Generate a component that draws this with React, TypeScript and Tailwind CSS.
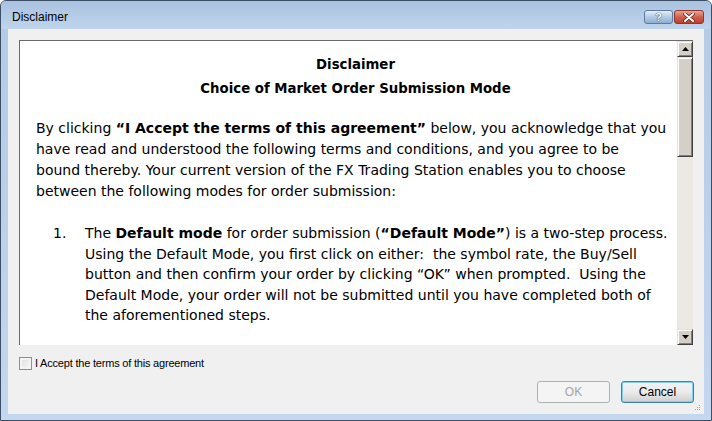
import React from 'react';

/**
 * Classic 3D scrollbar arrow button
 */
function ScrollButton({ dir }: { dir: 'up' | 'down' }) {
  return (
    <div className="h-[16px] w-[16px] shrink-0 bg-[#d4d0c8] border border-t-[#e4e2dc] border-l-[#e4e2dc] border-r-[#404040] border-b-[#404040] shadow-[inset_1px_1px_0_#ffffff,inset_-1px_-1px_0_#808080] flex items-center justify-center">
      <svg width="7" height="4" viewBox="0 0 7 4">
        {dir === 'up' ? <path d="M3.5 0 L7 4 L0 4 Z" fill="#000" /> : <path d="M0 0 L7 0 L3.5 4 Z" fill="#000" />}
      </svg>
    </div>
  );
}

export default function App() {
  return (
    <div className="w-[712px] h-[421px] flex flex-col bg-gradient-to-b from-[#b3cbe6] to-[#c3d7ee] border border-[#3d4f66] rounded-t-[6px] overflow-hidden font-['Liberation_Sans',Arial,sans-serif]">
      {/* 标题栏 */}
      <div className="h-[28px] shrink-0 flex items-center pt-[4px] pl-[11px] pr-[7px] bg-gradient-to-b from-[#a9c2df] to-[#c0d5ec]">
        <span className="text-[12px] text-black">Disclaimer</span>
        <div className="ml-auto flex gap-[1px]">
          <div className="w-[29px] h-[14px] rounded-[3px] border border-[#5f7a9c] bg-gradient-to-b from-[#e3eefa] via-[#b4cbe6] to-[#8eaed4] flex items-center justify-center">
            <span className="text-[11px] leading-none font-bold text-white [text-shadow:0_0_1px_#2a3d57,0_0_1px_#2a3d57]">?</span>
          </div>
          <div className="w-[30px] h-[14px] rounded-[3px] border border-[#8a3a2f] bg-gradient-to-b from-[#e7a597] via-[#d0604c] to-[#bd3f2b] flex items-center justify-center">
            <svg width="12" height="9" viewBox="0 0 12 9">
              <path d="M2 1 L10 8 M10 1 L2 8" stroke="#5a1f16" strokeWidth="3.4" strokeLinecap="round" />
              <path d="M2 1 L10 8 M10 1 L2 8" stroke="#ffffff" strokeWidth="2" strokeLinecap="round" />
            </svg>
          </div>
        </div>
      </div>

      {/* 客户区 */}
      <div className="relative flex-1 mx-[7px] mb-[6px] bg-[#f0f0f0] flex flex-col pt-[11px] pl-[11px]">
        {/* 文本框 */}
        <div className="h-[305px] mr-[11px] flex bg-white border-l border-t border-[#6b6b6b]">
          <div className="flex-1 overflow-hidden pl-[16px] pr-[2px] pt-[12px] text-[14px] text-black font-['DejaVu_Sans',Verdana,sans-serif]">
            <div className="text-center font-bold leading-[24px] text-[13.3px]">
              <div>Disclaimer</div>
              <div>Choice of Market Order Submission Mode</div>
            </div>
            <p className="mt-[17px] leading-[21px]">
              By clicking <b>“I Accept the terms of this agreement”</b> below, you acknowledge that you
              <br />
              have read and understood the following terms and conditions, and you agree to be
              <br />
              bound thereby. Your current version of the FX Trading Station enables you to choose
              <br />
              between the following modes for order submission:
            </p>
            <div className="mt-[21px] flex leading-[20.5px]">
              <span className="w-[49px] shrink-0 pl-[17px]">1.</span>
              <p>
                The <b>Default mode</b> for order submission (<b>“Default Mode”</b>) is a two-step process.
                <br />
                Using the Default Mode, you first click on either:&nbsp; the symbol rate, the Buy/Sell
                <br />
                button and then confirm your order by clicking “OK” when prompted.&nbsp; Using the
                <br />
                Default Mode, your order will not be submitted until you have completed both of
                <br />
                the aforementioned steps.
              </p>
            </div>
          </div>

          {/* 滚动条 */}
          <div className="w-[16px] shrink-0 flex flex-col bg-[#ebe9e4]">
            <ScrollButton dir="up" />
            <div className="h-[100px] shrink-0 bg-[#d4d0c8] border border-t-[#e4e2dc] border-l-[#e4e2dc] border-r-[#404040] border-b-[#404040] shadow-[inset_1px_1px_0_#ffffff,inset_-1px_-1px_0_#808080]" />
            <div className="flex-1" />
            <ScrollButton dir="down" />
          </div>
        </div>

        {/* 同意复选框 */}
        <label className="mt-[12px] flex items-center gap-[3px] h-[13px]">
          <span className="w-[13px] h-[13px] border border-[#8e8f8f] bg-gradient-to-br from-[#dcdcdc] to-[#fbfbfb] shadow-[inset_0_0_0_2px_#f4f4f4]" />
          <span className="text-[11px] tracking-[-0.2px] text-black">I Accept the terms of this agreement</span>
        </label>

        {/* 按钮 */}
        <div className="mt-[11px] flex justify-end gap-[11px] pr-[10px]">
          <button className="w-[73px] h-[22px] rounded-[3px] border border-[#adb2b5] bg-[#f4f4f4] text-[12px] text-[#a3a3a3]">
            OK
          </button>
          <button className="w-[73px] h-[22px] rounded-[3px] border border-[#3c7fb1] bg-gradient-to-b from-[#f2f2f2] via-[#ebebeb] to-[#cfcfcf] shadow-[inset_0_0_0_1px_#7fd0f2] text-[12px] text-black">
            Cancel
          </button>
        </div>

        {/* 尺寸调整手柄 */}
        <div className="absolute right-[3px] bottom-[3px] w-[7px] h-[7px]">
          <svg width="7" height="7" viewBox="0 0 7 7">
            <rect x="5" y="1" width="1" height="1" fill="#a0a0a0" />
            <rect x="3" y="3" width="1" height="1" fill="#a0a0a0" />
            <rect x="5" y="3" width="1" height="1" fill="#a0a0a0" />
            <rect x="1" y="5" width="1" height="1" fill="#a0a0a0" />
            <rect x="3" y="5" width="1" height="1" fill="#a0a0a0" />
            <rect x="5" y="5" width="1" height="1" fill="#a0a0a0" />
          </svg>
        </div>
      </div>
    </div>
  );
}
